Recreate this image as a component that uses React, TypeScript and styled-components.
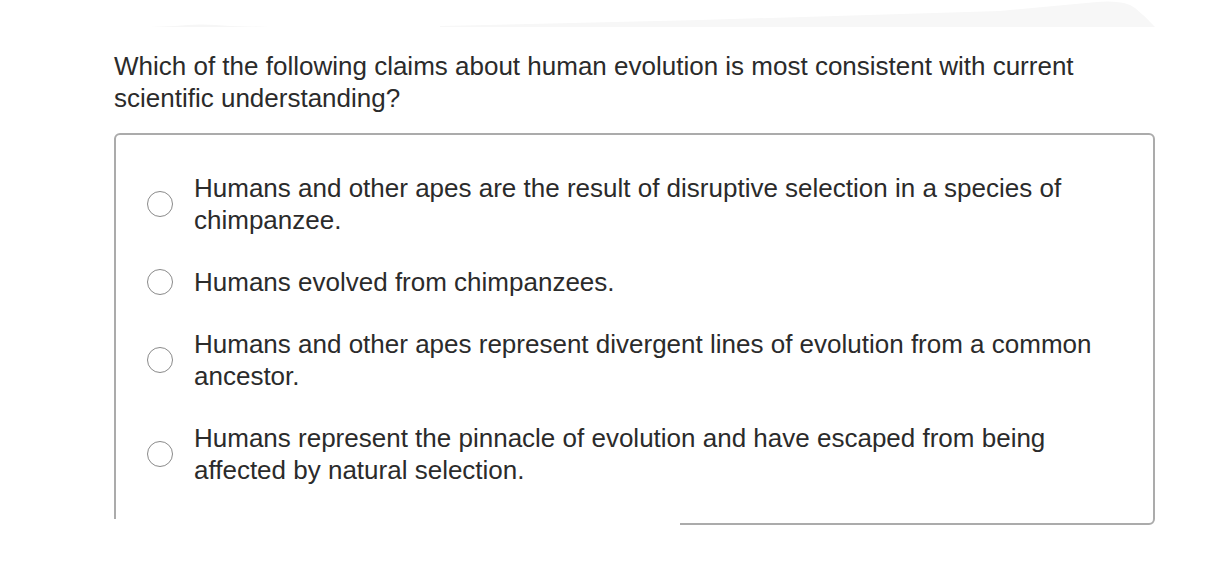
import React from "react";
import styled, { createGlobalStyle } from "styled-components";

const GlobalStyle = createGlobalStyle`
  html, body {
    margin: 0;
    padding: 0;
    background: #ffffff;
  }
  body {
    font-family: "Liberation Sans", Arial, Helvetica, sans-serif;
    color: #2b2b2b;
  }
`;

const Page = styled.div`
  width: 1227px;
  min-height: 575px;
  box-sizing: border-box;
`;

const Banner = styled.svg`
  display: block;
`;

const Content = styled.div`
  padding-left: 114px;
  padding-top: 22px;
`;

const Question = styled.p`
  margin: 0 0 19px 0;
  width: 1041px;
  font-size: 26px;
  line-height: 32px;
  color: #2b2b2b;
`;

const Choices = styled.div`
  position: relative;
  width: 1041px;
  box-sizing: border-box;
  border: 2px solid #ababab;
  border-radius: 6px;
  padding: 37px 40px 37px 31px;
  display: flex;
  flex-direction: column;
  gap: 30px;

  &::after {
    content: "";
    position: absolute;
    left: -3px;
    bottom: -3px;
    width: 567px;
    height: 7px;
    background: #ffffff;
  }
`;

const Choice = styled.label`
  display: flex;
  align-items: center;
  gap: 21px;
  cursor: pointer;
`;

const Radio = styled.span`
  flex: none;
  width: 26px;
  height: 26px;
  box-sizing: border-box;
  border-radius: 50%;
  border: 1px solid #8a8a8a;
  background: #ffffff;
`;

const ChoiceText = styled.span`
  font-size: 26px;
  line-height: 32px;
  color: #2b2b2b;
`;

const options = [
  "Humans and other apes are the result of disruptive selection in a species of chimpanzee.",
  "Humans evolved from chimpanzees.",
  "Humans and other apes represent divergent lines of evolution from a common ancestor.",
  "Humans represent the pinnacle of evolution and have escaped from being affected by natural selection.",
];

export default function App() {
  return (
    <>
      <GlobalStyle />
      <Page>
        <Banner width="1227" height="28" viewBox="0 0 1227 28">
          <path d="M150 27 L175 26 Q200 23 230 26 L270 27 Z" fill="#f6f6f6" />
          <path
            d="M440 27 L440 26 L700 20 L1000 11 L1097 2 Q1125 0 1135 8 Q1145 16 1155 27 Z"
            fill="#f7f7f7"
          />
        </Banner>
        <Content>
          <Question>
            Which of the following claims about human evolution is most consistent with current
            scientific understanding?
          </Question>
          <Choices>
            {options.map((o) => (
              <Choice key={o}>
                <Radio />
                <ChoiceText>{o}</ChoiceText>
              </Choice>
            ))}
          </Choices>
        </Content>
      </Page>
    </>
  );
}
